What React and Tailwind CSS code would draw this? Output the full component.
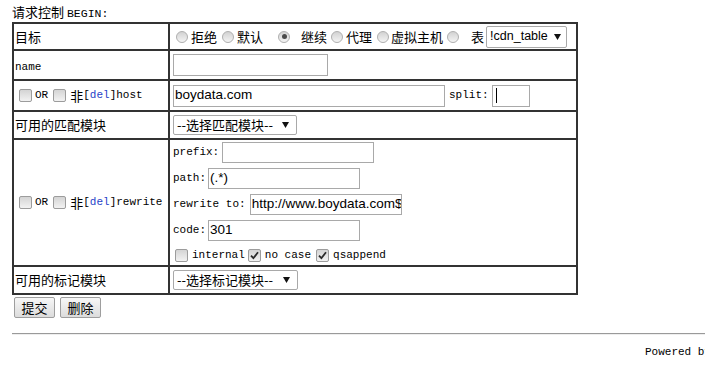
import React from 'react';

const cjk = "font-['Noto_Sans_CJK_SC','Noto_Sans',sans-serif]";
const mono = "font-['Liberation_Mono','DejaVu_Sans_Mono',monospace]";
const sans = "font-['Liberation_Sans','Noto_Sans_CJK_SC',sans-serif]";

const Radio = ({ checked, className = '' }) => (
  <span
    className={`inline-flex items-center justify-center w-[12px] h-[12px] shrink-0 rounded-full border border-[#b0b0b0] bg-linear-to-b from-[#d2d2d2] to-[#f4f4f4] ${className}`}
  >
    {checked && <span className="w-[5px] h-[5px] rounded-full bg-[#4a4a4a]" />}
  </span>
);

const Checkbox = ({ checked, className = '' }) => (
  <span
    className={`inline-flex items-center justify-center w-[13px] h-[13px] shrink-0 rounded-[2px] border border-[#9c9c9c] bg-linear-to-b from-[#d4d4d4] to-[#f2f2f2] ${className}`}
  >
    {checked && (
      <svg width="9" height="9" viewBox="0 0 9 9">
        <path d="M1 4.6 L3.4 7.2 L8 1.2" fill="none" stroke="#2a2a2a" strokeWidth="1.8" />
      </svg>
    )}
  </span>
);

const Input = ({ value = '', caret, className = '' }) => (
  <span
    className={`inline-flex items-center h-[22px] px-[1px] border border-[#a9a9a9] bg-white overflow-hidden whitespace-nowrap text-[13.5px] ${sans} ${className}`}
  >
    {value}
    {caret && <span className="ml-[1px] w-[1px] h-[15px] bg-black" />}
  </span>
);

const Select = ({ label, className = '' }) => (
  <span
    className={`inline-flex items-center justify-between h-[20px] pl-[3px] pr-[7px] border border-[#a9a9a9] rounded-[2px] bg-white whitespace-nowrap ${className}`}
  >
    <span>{label}</span>
    <svg width="7" height="6" viewBox="0 0 7 6" className="shrink-0">
      <path d="M0 0 H7 L3.5 6 Z" fill="#111" />
    </svg>
  </span>
);

const NotLabel = ({ name }) => (
  <div className="flex items-center">
    <Checkbox className="ml-[5px]" />
    <span className={`ml-[3px] text-[11px] ${mono}`}>OR</span>
    <Checkbox className="ml-[5px]" />
    <span className={`ml-[4px] text-[13px] ${cjk}`}>非</span>
    <span className={`text-[11px] ${mono}`}>
      [<span className="text-[#1f3fc8]">del</span>]{name}
    </span>
  </div>
);

const cell = 'border-2 border-[#333] p-0 align-middle';

export default function App() {
  return (
    <div className={`w-[705px] h-[386px] overflow-hidden bg-white text-black ${cjk}`}>
      <div className="pl-[12px] h-[22px] pt-[2px] leading-[20px] text-[13px]">
        请求控制 <span className={`text-[11.5px] ${mono}`}>BEGIN:</span>
      </div>

      <table className="ml-[12px] border-collapse w-[566px] text-[13px]">
        <tbody>
          <tr>
            <td className={`${cell} w-[156px] h-[27px] pl-[1px]`}>目标</td>
            <td className={`${cell} h-[27px]`}>
              <div className="flex items-center pl-[1px]">
                <Radio className="ml-[5px]" />
                <span className="ml-[3px]">拒绝</span>
                <Radio className="ml-[5px]" />
                <span className="ml-[3px]">默认</span>
                <Radio checked className="ml-[15px]" />
                <span className="ml-[11px]">继续</span>
                <Radio className="ml-[4px]" />
                <span className="ml-[3px]">代理</span>
                <Radio className="ml-[5px]" />
                <span className="ml-[2px]">虚拟主机</span>
                <Radio className="ml-[4px]" />
                <span className="ml-[12px]">表</span>
                <Select
                  label="!cdn_table"
                  className={`ml-[2px] w-[81px] !h-[22px] !pr-[5px] text-[12.5px] ${sans}`}
                />
              </div>
            </td>
          </tr>

          <tr>
            <td className={`${cell} h-[30px] pl-[1px]`}>
              <span className={`text-[11px] ${mono}`}>name</span>
            </td>
            <td className={`${cell} h-[30px]`}>
              <div className="flex items-center pl-[3px]">
                <Input className="w-[155px]" />
              </div>
            </td>
          </tr>

          <tr>
            <td className={`${cell} h-[31px]`}>
              <NotLabel name="host" />
            </td>
            <td className={`${cell} h-[31px]`}>
              <div className="flex items-center pl-[3px]">
                <Input value="boydata.com" className="w-[272px]" />
                <span className={`ml-[4px] text-[11px] ${mono}`}>split:</span>
                <Input caret className="ml-[3px] w-[38px] !px-[2px]" />
              </div>
            </td>
          </tr>

          <tr>
            <td className={`${cell} h-[28px] pl-[1px]`}>可用的匹配模块</td>
            <td className={`${cell} h-[28px]`}>
              <div className="flex items-center pl-[3px]">
                <Select label="--选择匹配模块--" className="w-[124px] text-[13px]" />
              </div>
            </td>
          </tr>

          <tr>
            <td className={`${cell} h-[127px]`}>
              <NotLabel name="rewrite" />
            </td>
            <td className={`${cell} h-[127px] align-top`}>
              <div className={`flex flex-col pl-[3px] text-[11px] ${mono}`}>
                <div className="flex items-start h-[26px] pt-[2px]">
                  <span className="leading-[21px]">prefix:</span>
                  <Input className="ml-[3px] w-[152px] !h-[21px]" />
                </div>
                <div className="flex items-start h-[26px] pt-[2px]">
                  <span className="leading-[21px]">path:</span>
                  <Input value="(.*)" className="ml-[2px] w-[152px] !h-[21px]" />
                </div>
                <div className="flex items-start h-[26px] pt-[2px]">
                  <span className="leading-[21px]">rewrite to:</span>
                  <Input value="http://www.boydata.com$1" className="ml-[4px] w-[152px] !h-[21px]" />
                </div>
                <div className="flex items-start h-[26px] pt-[2px]">
                  <span className="leading-[21px]">code:</span>
                  <Input value="301" className="ml-[2px] w-[152px] !h-[21px]" />
                </div>
                <div className="flex items-center h-[21px] pt-[2px]">
                  <Checkbox className="ml-[2px]" />
                  <span className="ml-[4px]">internal</span>
                  <Checkbox checked className="ml-[3px]" />
                  <span className="ml-[4px]">no case</span>
                  <Checkbox checked className="ml-[5px]" />
                  <span className="ml-[4px]">qsappend</span>
                </div>
              </div>
            </td>
          </tr>

          <tr>
            <td className={`${cell} h-[28px] pl-[1px]`}>可用的标记模块</td>
            <td className={`${cell} h-[28px]`}>
              <div className="flex items-center pl-[3px]">
                <Select label="--选择标记模块--" className="w-[125px] text-[13px]" />
              </div>
            </td>
          </tr>
        </tbody>
      </table>

      <div className="flex gap-[5px] pl-[14px] pt-[2px]">
        <button className="w-[41px] h-[21px] border border-[#9e9e9e] rounded-[2px] bg-linear-to-b from-[#f7f7f7] to-[#dcdcdc] text-[13px] leading-none">
          提交
        </button>
        <button className="w-[41px] h-[21px] border border-[#9e9e9e] rounded-[2px] bg-linear-to-b from-[#f7f7f7] to-[#dcdcdc] text-[13px] leading-none">
          删除
        </button>
      </div>

      <div className="ml-[12px] mt-[15px] w-[800px] border-t border-b border-t-[#9a9a9a] border-b-[#eeeeee]" />

      <div className={`pl-[645px] pt-[9px] whitespace-nowrap text-[11px] ${mono}`}>
        Powered by boydata
      </div>
    </div>
  );
}
